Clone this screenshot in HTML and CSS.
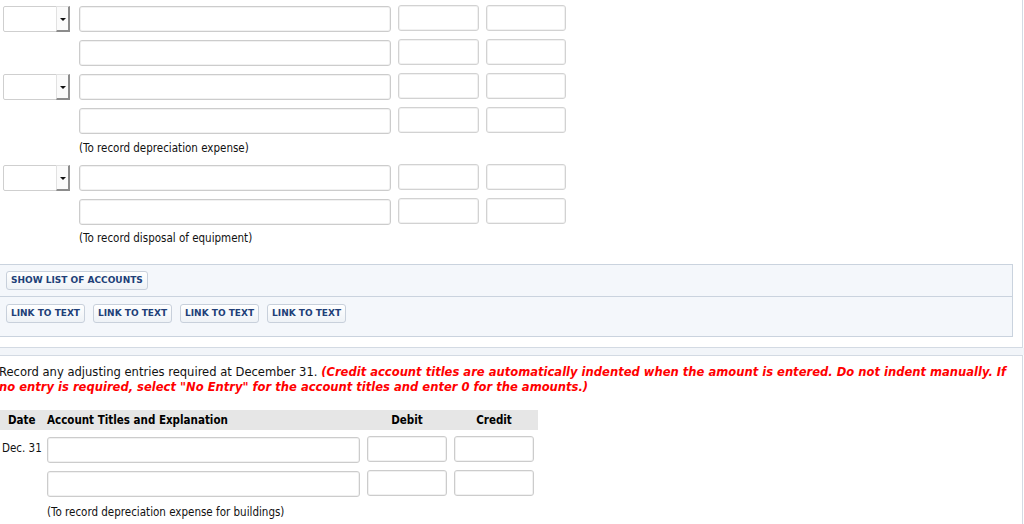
FILE: index.html
```html
<!DOCTYPE html>
<html>
<head>
<meta charset="utf-8">
<link rel="stylesheet" href="styles.css">
</head>
<body>
<div class="outer">
  <div class="entries">
    <div class="cell-sel"><div class="select"><span class="arrow"></span></div></div>
    <input class="inp acct" type="text"><input class="inp amt up" type="text"><input class="inp amt up" type="text">

    <div></div>
    <input class="inp acct" type="text"><input class="inp amt up" type="text"><input class="inp amt up" type="text">

    <div class="cell-sel"><div class="select"><span class="arrow"></span></div></div>
    <input class="inp acct" type="text"><input class="inp amt up" type="text"><input class="inp amt up" type="text">

    <div></div>
    <input class="inp acct" type="text"><input class="inp amt up" type="text"><input class="inp amt up" type="text">

    <div></div>
    <div class="note">(To record depreciation expense)</div>

    <div class="cell-sel"><div class="select"><span class="arrow"></span></div></div>
    <input class="inp acct" type="text"><input class="inp amt up" type="text"><input class="inp amt up" type="text">

    <div></div>
    <input class="inp acct" type="text"><input class="inp amt up" type="text"><input class="inp amt up" type="text">

    <div></div>
    <div class="note note-b">(To record disposal of equipment)</div>
  </div>

  <div class="panel">
    <div class="panel-row first">
      <button class="btn">SHOW LIST OF ACCOUNTS</button>
    </div>
    <div class="panel-row second">
      <button class="btn">LINK TO TEXT</button>
      <button class="btn">LINK TO TEXT</button>
      <button class="btn">LINK TO TEXT</button>
      <button class="btn">LINK TO TEXT</button>
    </div>
  </div>
</div>

<div class="band"></div>

<div class="outer2">
  <p class="instr">Record any adjusting entries required at December 31. <em class="warn">(Credit account titles are automatically indented when the amount is entered. Do not indent manually. If<br>no entry is required, select "No Entry" for the account titles and enter 0 for the amounts.)</em></p>

  <div class="journal">
    <div class="jh date-h">Date</div>
    <div class="jh">Account Titles and Explanation</div>
    <div class="jh center">Debit</div>
    <div class="jh center last">Credit</div>

    <div class="date">Dec. 31</div>
    <input class="inp" type="text"><input class="inp up" type="text"><input class="inp up" type="text">

    <div></div>
    <input class="inp" type="text"><input class="inp up" type="text"><input class="inp up" type="text">

    <div></div>
    <div class="note2">(To record depreciation expense for buildings)</div>
  </div>
</div>
</body>
</html>
```

FILE: styles.css
```css
html, body {
  margin: 0;
  padding: 0;
  background: #ffffff;
  overflow: hidden;
}

body {
  font-family: "DejaVu Sans", Verdana, sans-serif;
  color: #000;
  width: 1024px;
}

.outer {
  width: 1023px;
  box-sizing: border-box;
  border-right: 1px solid #d3dae3;
  border-bottom: 1px solid #d3dae3;
  padding: 6px 0 10px 0;
}

.entries {
  display: grid;
  grid-template-columns: 72px 312px 81px 80px;
  column-gap: 7px;
  row-gap: 8px;
  align-items: center;
}

.cell-sel {
  height: 26px;
}

.select {
  position: relative;
  margin-left: 3px;
  width: 67px;
  height: 26px;
  box-sizing: border-box;
  border: 1px solid #cfcfcf;
  border-radius: 2px;
  background: #fff;
}

.arrow {
  position: absolute;
  right: -1px;
  top: -1px;
  width: 14px;
  height: 26px;
  box-sizing: border-box;
  border-left: 1px solid #e2e2e2;
  border-right: 2px solid #8c8c8c;
  border-bottom: 2px solid #8c8c8c;
  border-top: 1px solid #e0e0e0;
  background: #fbfbfb;
}

.arrow::after {
  content: "";
  position: absolute;
  left: 3px;
  top: 11px;
  border-left: 3px solid transparent;
  border-right: 3px solid transparent;
  border-top: 3px solid #111;
}

.inp {
  display: block;
  height: 26px;
  box-sizing: border-box;
  margin: 0;
  padding: 0 4px;
  border: 1px solid #cccccc;
  border-radius: 3px;
  background: #fff;
  box-shadow: inset 0 0 0 1px #f1f1f1;
  font: 12px "DejaVu Sans", sans-serif;
  outline: none;
}

.amt {
  border-color: #d2d2d2;
}

.up {
  position: relative;
  top: -1px;
}

.note {
  grid-column: 2 / span 3;
  font-family: "DejaVu Sans Condensed", "DejaVu Sans", sans-serif;
  font-size: 11.5px;
  line-height: 15px;
  height: 15px;
  color: #111;
  position: relative;
  top: -1px;
}

.note-b {
  top: -2px;
}

.panel {
  margin-top: 16px;
  margin-left: -1px;
  width: 1014px;
  box-sizing: border-box;
  border: 1px solid #cad3de;
  background: #f4f7fb;
}

.panel-row {
  display: flex;
  gap: 8px;
  padding-left: 6px;
}

.panel-row.first {
  padding-top: 6px;
  padding-bottom: 6px;
  border-bottom: 1px solid #cad3de;
}

.panel-row.second {
  padding-top: 7px;
  padding-bottom: 13px;
}

.btn {
  margin: 0;
  height: 19px;
  padding: 0 4px;
  border: 1px solid #c8d0db;
  border-radius: 3px;
  background: linear-gradient(#ffffff, #eef2f6);
  color: #213f78;
  font-family: "DejaVu Sans", Verdana, sans-serif;
  font-weight: bold;
  font-size: 9px;
  line-height: 17px;
  cursor: pointer;
}

.panel-row.first .btn {
  margin-left: 0;
}

.band {
  height: 7px;
  background: #f2f5f9;
}

.outer2 {
  width: 1023px;
  box-sizing: border-box;
  border-top: 1px solid #d3dae3;
  border-right: 1px solid #d3dae3;
  padding-top: 8px;
  height: 200px;
}

.instr {
  margin: 0 0 0 -1px;
  font-family: "DejaVu Sans Condensed", "DejaVu Sans", sans-serif;
  font-size: 12.85px;
  line-height: 15px;
  white-space: nowrap;
  color: #111;
}

.warn {
  color: #ff0000;
  font-weight: bold;
  font-style: italic;
}

.journal {
  margin-top: 16px;
  display: grid;
  grid-template-columns: 40px 313px 80px 80px;
  column-gap: 7px;
  row-gap: 8px;
  align-items: center;
  width: 538px;
}

.jh {
  background: #e6e6e6;
  height: 20px;
  line-height: 20px;
  font-family: "DejaVu Sans Condensed", "DejaVu Sans", sans-serif;
  font-weight: bold;
  font-size: 11.5px;
  margin: 0 -7px -1px 0;
  padding-right: 7px;
  white-space: nowrap;
}

.jh.last {
  margin-right: -4px;
  padding-right: 4px;
}

.date-h {
  padding-left: 8px;
}

.center {
  text-align: center;
}

.date {
  font-family: "DejaVu Sans Condensed", "DejaVu Sans", sans-serif;
  font-size: 11.5px;
  padding-left: 2px;
  color: #111;
  white-space: nowrap;
  position: relative;
  top: -2px;
}

.note2 {
  grid-column: 2 / span 3;
  font-family: "DejaVu Sans Condensed", "DejaVu Sans", sans-serif;
  font-size: 11.5px;
  line-height: 14px;
  color: #111;
}
```
